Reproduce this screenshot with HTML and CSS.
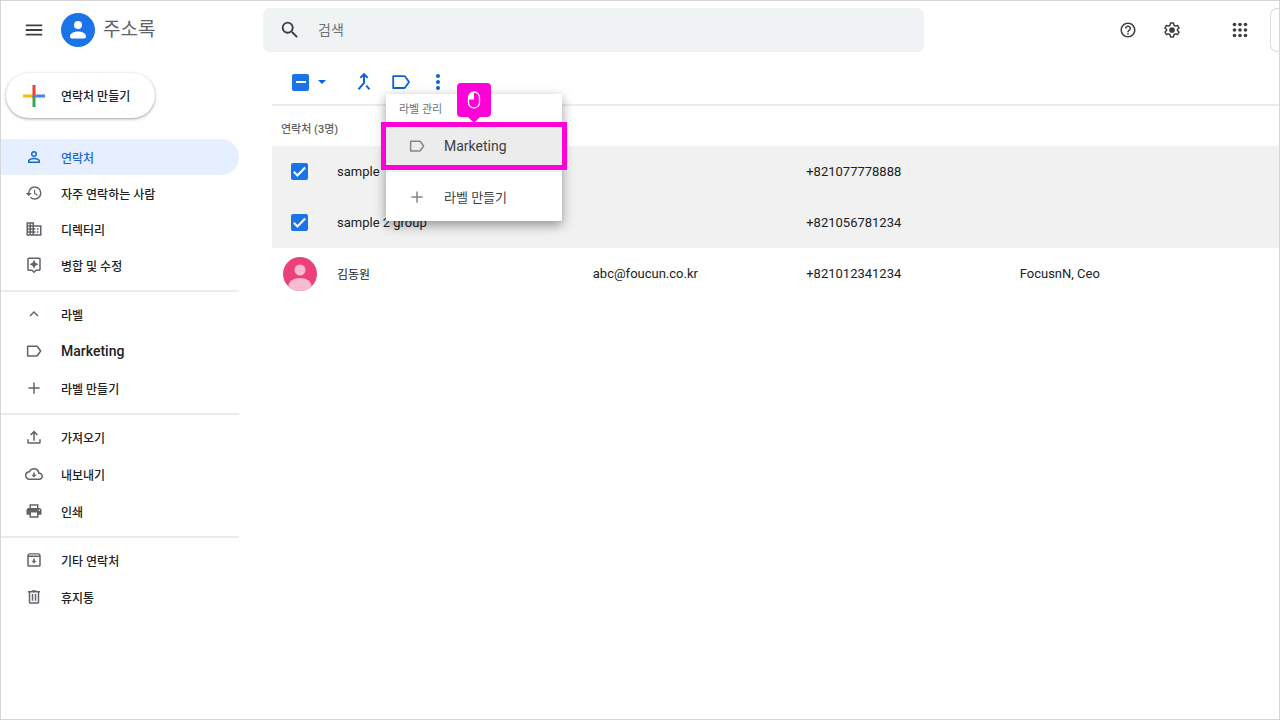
FILE: index.html
```html
<!DOCTYPE html>
<html lang="ko">
<head>
<meta charset="utf-8">
<meta name="viewport" content="width=device-width, initial-scale=1">
<title>주소록</title>
<link rel="stylesheet" href="styles.css">
</head>
<body>
<svg class="sprite" aria-hidden="true">
  <symbol id="i-label" viewBox="0 0 24 24"><path d="M3.500 5.500h12c.4 0 .8.2 1 .5L20.800 12l-4.300 6c-.2.300-.6.500-1 .5h-12z" fill="none" stroke="currentColor" stroke-width="2" stroke-linejoin="round"/></symbol>
  <symbol id="i-plus" viewBox="0 0 24 24"><path d="M19.500 13H13v6.500h-2V13H4.500v-2H11V4.500h2V11h6.500z"/></symbol>
  <symbol id="i-check" viewBox="0 0 24 24"><path d="M4 12.500l5 5L20 6.500" fill="none" stroke="#fff" stroke-width="3"/></symbol>
</svg>
<div class="page">
  <header class="header">
    <div class="brand">
      <button class="icon-button" type="button" aria-label="메뉴"><svg class="icon icon-lg" viewBox="0 0 24 24"><path d="M3 18h18v-2H3v2zm0-5h18v-2H3v2zm0-7v2h18V6H3z"/></svg></button>
      <svg class="logo" viewBox="0 0 34 34" aria-hidden="true"><circle cx="17" cy="17" r="17" fill="#1a73e8"/><circle cx="17" cy="12" r="4" fill="#fff"/><path d="M9 23.500c0-3.500 4-5 8-5s8 1.500 8 5c0 1-.8 2-1.800 2H10.800c-1 0-1.800-1-1.800-2z" fill="#fff"/></svg>
      <h1 class="title">주소록</h1>
    </div>
    <label class="search">
      <svg class="icon icon-lg" viewBox="0 0 24 24" aria-hidden="true"><path d="M15.500 14h-.79l-.28-.27A6.470 6.470 0 0 0 16 9.500 6.500 6.500 0 1 0 9.500 16c1.610 0 3.090-.59 4.230-1.570l.27.28v.79l5 4.990L20.490 19l-4.990-5zm-6 0C7.010 14 5 11.990 5 9.500S7.010 5 9.500 5 14 7.010 14 9.500 11.990 14 9.500 14z"/></svg>
      <input class="search-input" type="text" placeholder="검색" aria-label="검색">
    </label>
    <div class="header-actions">
      <button class="icon-button" type="button" aria-label="도움말"><svg class="icon" viewBox="0 0 24 24"><path d="M11 18h2v-2h-2v2zm1-16C6.480 2 2 6.480 2 12s4.480 10 10 10 10-4.480 10-10S17.520 2 12 2zm0 18c-4.410 0-8-3.590-8-8s3.590-8 8-8 8 3.590 8 8-3.590 8-8 8zm0-14c-2.210 0-4 1.790-4 4h2c0-1.100.9-2 2-2s2 .9 2 2c0 2-3 1.750-3 5h2c0-2.250 3-2.500 3-5 0-2.210-1.790-4-4-4z"/></svg></button>
      <button class="icon-button" type="button" aria-label="설정"><svg class="icon" viewBox="0 0 24 24"><path d="M10 2.800h4l.6 2.900 2 1.100 2.800-.9 2 3.500-2.200 1.900v1.400l2.200 1.900-2 3.500-2.800-.9-2 1.100-.6 2.900h-4l-.6-2.900-2-1.100-2.800.9-2-3.500 2.200-1.900v-1.400L2.600 9.400l2-3.500 2.800.9 2-1.100z" fill="none" stroke="currentColor" stroke-width="2" stroke-linejoin="round"/><circle cx="12" cy="12" r="3.800"/></svg></button>
      <button class="icon-button apps" type="button" aria-label="앱"><svg class="icon icon-lg" viewBox="0 0 24 24"><circle cx="6" cy="6" r="2"/><circle cx="12" cy="6" r="2"/><circle cx="18" cy="6" r="2"/><circle cx="6" cy="12" r="2"/><circle cx="12" cy="12" r="2"/><circle cx="18" cy="12" r="2"/><circle cx="6" cy="18" r="2"/><circle cx="12" cy="18" r="2"/><circle cx="18" cy="18" r="2"/></svg></button>
      <button class="account" type="button" aria-label="계정"></button>
    </div>
  </header>

  <div class="body">
    <aside class="sidebar">
      <button class="create" type="button">
        <svg class="create-icon" viewBox="0 0 22 22" aria-hidden="true"><path d="M0 9.500h11v3H0z" fill="#fbbc04"/><path d="M9.500 11h3v11h-3z" fill="#34a853"/><path d="M12.500 9.500H22v3H9.500z" fill="#4285f4"/><path d="M9.500 0h3v9.500l-3 3z" fill="#ea4335"/></svg>
        연락처 만들기
      </button>
      <nav class="nav">
        <div class="nav-group nav-group-primary">
          <a class="nav-item active" href="#"><svg class="icon" viewBox="0 0 24 24"><path d="M12 5.900a2.100 2.100 0 1 1 0 4.200 2.100 2.100 0 0 1 0-4.200m0 9c2.970 0 6.100 1.460 6.100 2.100v1.100H5.900V17c0-.64 3.130-2.100 6.100-2.100M12 4a4 4 0 1 0 0 8 4 4 0 0 0 0-8zm0 9c-2.670 0-8 1.340-8 4v3h16v-3c0-2.660-5.330-4-8-4z"/></svg>연락처</a>
          <a class="nav-item" href="#"><svg class="icon" viewBox="0 0 24 24"><path d="M13 3a9 9 0 0 0-9 9H1l4 4 4-4H6c0-3.870 3.130-7 7-7s7 3.130 7 7-3.130 7-7 7c-1.930 0-3.680-.79-4.940-2.060l-1.420 1.420A8.950 8.950 0 0 0 13 21a9 9 0 0 0 0-18zm-1 5v5l4.250 2.520.77-1.280-3.520-2.090V8z"/></svg>자주 연락하는 사람</a>
          <a class="nav-item" href="#"><svg class="icon" viewBox="0 0 24 24"><path d="M12 7V3H2v18h20V7H12zM6 19H4v-2h2v2zm0-4H4v-2h2v2zm0-4H4V9h2v2zm0-4H4V5h2v2zm4 12H8v-2h2v2zm0-4H8v-2h2v2zm0-4H8V9h2v2zm0-4H8V5h2v2zm10 12h-8v-2h2v-2h-2v-2h2v-2h-2V9h8v10zm-2-8h-2v2h2v-2zm0 4h-2v2h2v-2z"/></svg>디렉터리</a>
          <a class="nav-item" href="#"><svg class="icon" viewBox="0 0 24 24"><path d="M19 2H5a2 2 0 0 0-2 2v14c0 1.100.9 2 2 2h4l3 3 3-3h4c1.100 0 2-.9 2-2V4a2 2 0 0 0-2-2zm0 16h-4.830L12 20.170 9.830 18H5V4h14v14zm-7-1l1.880-4.120L18 11l-4.120-1.880L12 5l-1.880 4.120L6 11l4.120 1.880z"/></svg>병합 및 수정</a>
        </div>
        <div class="nav-group">
          <a class="nav-item" href="#"><svg class="icon" viewBox="0 0 24 24"><path d="M12 8l-6 6 1.410 1.410L12 10.830l4.590 4.580L18 14z"/></svg>라벨</a>
          <a class="nav-item latin" href="#"><svg class="icon"><use href="#i-label"/></svg>Marketing</a>
          <a class="nav-item" href="#"><svg class="icon"><use href="#i-plus"/></svg>라벨 만들기</a>
        </div>
        <div class="nav-group">
          <a class="nav-item" href="#"><svg class="icon" viewBox="0 0 24 24"><path d="M11 17V7.200L8.200 10 6.800 8.600 12 3.400l5.200 5.200L15.800 10 13 7.200V17zM3 15h2v4h14v-4h2v4a2 2 0 0 1-2 2H5a2 2 0 0 1-2-2z"/></svg>가져오기</a>
          <a class="nav-item" href="#"><svg class="icon icon-cloud" viewBox="0 0 24 24"><path d="M19.350 10.040A7.490 7.490 0 0 0 12 4C9.110 4 6.600 5.640 5.350 8.040A5.994 5.994 0 0 0 0 14c0 3.310 2.690 6 6 6h13c2.760 0 5-2.240 5-5 0-2.640-2.050-4.780-4.650-4.960zM19 18H6c-2.210 0-4-1.790-4-4s1.790-4 4-4h.71C7.370 7.690 9.480 6 12 6c3.040 0 5.500 2.460 5.500 5.500v.5H19c1.660 0 3 1.340 3 3s-1.340 3-3 3zm-6-8v3h2.500L12 16.500 8.500 13H11v-3z"/></svg>내보내기</a>
          <a class="nav-item" href="#"><svg class="icon" viewBox="0 0 24 24"><path d="M19 8h-1V3H6v5H5c-1.660 0-3 1.340-3 3v6h4v4h12v-4h4v-6c0-1.660-1.340-3-3-3zM8 5h8v3H8V5zm8 14H8v-5h8v5zm3-7a1 1 0 1 1 0-2 1 1 0 0 1 0 2z"/></svg>인쇄</a>
        </div>
        <div class="nav-group">
          <a class="nav-item" href="#"><svg class="icon" viewBox="0 0 24 24"><path d="M5 3h14l2 2.500V19a2 2 0 0 1-2 2H5a2 2 0 0 1-2-2V5.500zm0 5v11h14V8zm.6-3.200L5 6h14l-.6-1.200zM11 10h2v3h2.500L12 16.500 8.500 13H11z" fill-rule="evenodd"/></svg>기타 연락처</a>
          <a class="nav-item" href="#"><svg class="icon" viewBox="0 0 24 24"><path d="M15 4V3H9v1H4v2h1v13c0 1.100.9 2 2 2h10c1.100 0 2-.9 2-2V6h1V4h-5zm2 15H7V6h10v13zM9 8h2v9H9zm4 0h2v9h-2z"/></svg>휴지통</a>
        </div>
      </nav>
    </aside>

    <main class="main">
      <div class="toolbar">
        <input class="checkbox partial" type="checkbox" aria-label="모두 선택">
        <button class="icon-button caret" type="button" aria-label="선택 옵션"><svg width="10" height="6" viewBox="0 0 10 6"><path d="M1 1h8L5 5z" fill="currentColor"/></svg></button>
        <button class="icon-button" type="button" aria-label="병합"><svg class="icon icon-lg" viewBox="0 0 24 24"><path d="M8 7.500l4-4 4 4M12 4.500V13l-6 7M14.500 16l3.500 4" fill="none" stroke="currentColor" stroke-width="2.200"/></svg></button>
        <div class="label-control">
          <button class="icon-button" type="button" aria-label="라벨 관리"><svg class="icon icon-lg"><use href="#i-label"/></svg></button>
          <div class="menu">
            <p class="menu-title">라벨 관리</p>
            <div class="menu-target">
              <button class="menu-item hovered" type="button"><svg class="icon"><use href="#i-label"/></svg>Marketing</button>
              <div class="highlight"></div>
              <div class="pointer"><svg width="14" height="20" viewBox="0 0 14 20"><rect x="1.500" y="2" width="11" height="16" rx="5.500" fill="none" stroke="#fff" stroke-width="1.300"/><path d="M7 2v7.500H1.500v-2C1.500 4.500 4 2 7 2z" fill="#fff"/></svg></div>
            </div>
            <button class="menu-item menu-item-new" type="button"><svg class="icon"><use href="#i-plus"/></svg>라벨 만들기</button>
          </div>
        </div>
        <button class="icon-button" type="button" aria-label="더보기"><svg class="icon icon-lg" viewBox="0 0 24 24"><circle cx="12" cy="5.500" r="2.200"/><circle cx="12" cy="12" r="2.200"/><circle cx="12" cy="18.500" r="2.200"/></svg></button>
      </div>

      <h2 class="list-title">연락처 (3명)</h2>
      <table class="contacts">
        <colgroup><col class="col-pick"><col class="col-name"><col class="col-mail"><col class="col-phone"><col></colgroup>
        <tbody>
          <tr class="selected"><td class="pick"><span class="tick"><input class="checkbox" type="checkbox" checked aria-label="sample"><svg><use href="#i-check"/></svg></span></td><td>sample</td><td></td><td>+821077778888</td><td></td></tr>
          <tr class="selected"><td class="pick"><span class="tick"><input class="checkbox" type="checkbox" checked aria-label="sample 2 group"><svg><use href="#i-check"/></svg></span></td><td>sample 2 group</td><td></td><td>+821056781234</td><td></td></tr>
          <tr><td class="pick"><svg class="avatar" viewBox="0 0 34 34" aria-hidden="true"><clipPath id="round"><circle cx="17" cy="17" r="17"/></clipPath><g clip-path="url(#round)"><path d="M0 0h34v34H0z" fill="#ec407a"/><circle cx="17" cy="13" r="5.500" fill="#f8bbd0"/><ellipse cx="17" cy="29" rx="11.500" ry="8" fill="#f8bbd0"/></g></svg></td><td class="korean">김동원</td><td>abc@foucun.co.kr</td><td>+821012341234</td><td>FocusnN, Ceo</td></tr>
        </tbody>
      </table>
    </main>
  </div>
</div>
</body>
</html>
```

FILE: styles.css
```css
* { box-sizing: border-box; }

body {
  margin: 0;
  font-family: Roboto, "Noto Sans CJK KR", sans-serif;
  font-size: 13px;
  color: #202124;
  background: #fff;
}

button, input {
  font: inherit;
  color: inherit;
  margin: 0;
}

button {
  padding: 0;
  border: 0;
  background: none;
  cursor: pointer;
}

.sprite { position: absolute; width: 0; height: 0; }

.page {
  display: flex;
  flex-direction: column;
  min-height: 100vh;
  border: 1px solid #d6d6d6;
}

.icon {
  display: block;
  flex: none;
  width: 18px;
  height: 18px;
  fill: currentColor;
}
.icon-lg { width: 22px; height: 22px; }
.icon-button {
  display: flex;
  align-items: center;
  justify-content: center;
}

/* Header */
.header {
  display: flex;
  align-items: center;
  padding: 7px 0 1px;
  color: #3c4043;
}
.brand {
  display: flex;
  align-items: center;
  flex: none;
  width: 262px;
  padding-left: 22px;
}
.logo { width: 34px; height: 34px; margin: 0 8px 0 16px; }
.title {
  margin: 0;
  font-size: 19px;
  line-height: 28px;
  font-weight: 400;
  color: #5f6368;
}
.search {
  display: flex;
  align-items: center;
  flex: 0 1 661px;
  min-width: 0;
  height: 44px;
  padding: 0 16px;
  gap: 17px;
  border-radius: 7px;
  background: #eff3f4;
}
.search-input {
  flex: 1;
  min-width: 0;
  padding: 0;
  border: 0;
  outline: 0;
  background: none;
  font-size: 14px;
}
.search-input::placeholder { color: #6d7175; opacity: 1; }
.header-actions {
  display: flex;
  align-items: center;
  flex: none;
  gap: 26px;
  margin-left: auto;
}
.apps { margin-left: 22px; }
.account {
  width: 9px;
  height: 44px;
  margin-left: -7px;
  border: 1px solid #dadce0;
  border-right: 0;
  border-radius: 7px 0 0 7px;
}

/* Sidebar */
.body { display: flex; flex: 1; }
.sidebar { flex: none; width: 238px; margin-right: 33px; }
.create {
  display: flex;
  align-items: center;
  gap: 16px;
  width: 149px;
  height: 45px;
  margin: 20px 0 21px 5px;
  padding-left: 17px;
  border-radius: 23px;
  font-size: 12px;
  font-weight: 500;
  box-shadow: 0 1px 2px rgba(60, 64, 67, .3), 0 1px 3px 1px rgba(60, 64, 67, .15);
}
.create-icon { width: 22px; height: 22px; }
.nav-group { display: flex; flex-direction: column; gap: 1px; }
.nav-group-primary { gap: 0; }
.nav-group + .nav-group {
  margin-top: 7px;
  padding-top: 4px;
  border-top: 2px solid #ececec;
}
.nav-item {
  display: flex;
  align-items: center;
  gap: 18px;
  height: 36px;
  padding-left: 24px;
  border-radius: 0 18px 18px 0;
  font-size: 12px;
  font-weight: 500;
  color: #202124;
  text-decoration: none;
}
.nav-item .icon { color: #5f6368; }
.nav-item.latin { font-size: 14px; }
.nav-item.active { background: #e5efff; }
.nav-item.active, .nav-item.active .icon { color: #1967d2; }

/* Contact list */
.main { flex: 1; min-width: 0; }
.toolbar {
  display: flex;
  align-items: center;
  height: 53px;
  padding: 7px 0 0 20px;
  gap: 15px;
  border-bottom: 2px solid #ececec;
  color: #0b63dc;
}
.caret { margin: 0 11px 0 -7px; }
.label-control { position: relative; }

.checkbox {
  appearance: none;
  display: block;
  width: 17px;
  height: 17px;
  border-radius: 2px;
  background: #1a73e8;
}
.partial { display: grid; place-items: center; }
.partial::after {
  content: "";
  width: 10px;
  height: 2px;
  background: #fff;
}
.tick { display: grid; width: 17px; margin-left: 19px; }
.tick > * { grid-area: 1 / 1; }
.tick svg { width: 17px; height: 17px; pointer-events: none; }

.list-title {
  margin: 0;
  padding: 16px 9px 8px;
  font-size: 11px;
  line-height: 16px;
  font-weight: 500;
  color: #5f6368;
}
.contacts {
  width: 100%;
  table-layout: fixed;
  border-collapse: collapse;
}
.col-pick { width: 65px; }
.col-name { width: 25.4%; }
.col-mail, .col-phone { width: 21.2%; }
.contacts td { height: 51px; padding: 0; }
.contacts .korean { font-size: 12px; }
.selected { background: #f1f1f1; }
.avatar { display: block; width: 34px; height: 34px; margin-left: 11px; }

/* Label menu */
.menu {
  position: absolute;
  z-index: 2;
  top: 23px;
  left: -4px;
  width: 176px;
  border-radius: 2px;
  background: #fff;
  box-shadow: 0 4px 12px rgba(0, 0, 0, .4);
}
.menu-title {
  margin: 0;
  padding: 8px 13px 7px;
  font-size: 11px;
  line-height: 16px;
  color: #6d7175;
}
.menu-target { position: relative; }
.menu-item {
  display: flex;
  align-items: center;
  gap: 18px;
  width: 100%;
  height: 42px;
  padding-left: 22px;
  font-size: 14px;
  color: #3c4043;
}
.menu-item .icon { color: #80868b; }
.hovered { background: #ececec; }
.menu-item-new {
  height: 50px;
  margin-top: 4px;
  border-top: 1px solid #ececec;
  font-size: 13px;
}
.highlight {
  position: absolute;
  inset: -3px -5px;
  border: 5px solid #ff00d8;
  pointer-events: none;
}
.pointer {
  position: absolute;
  left: 71px;
  bottom: 50px;
  display: grid;
  place-items: center;
  width: 34px;
  height: 34px;
  border-radius: 4px;
  background: #ff00d8;
}
.pointer::after {
  content: "";
  position: absolute;
  top: 34px;
  left: 11px;
  border: 6px solid transparent;
  border-top-color: #ff00d8;
}
```
